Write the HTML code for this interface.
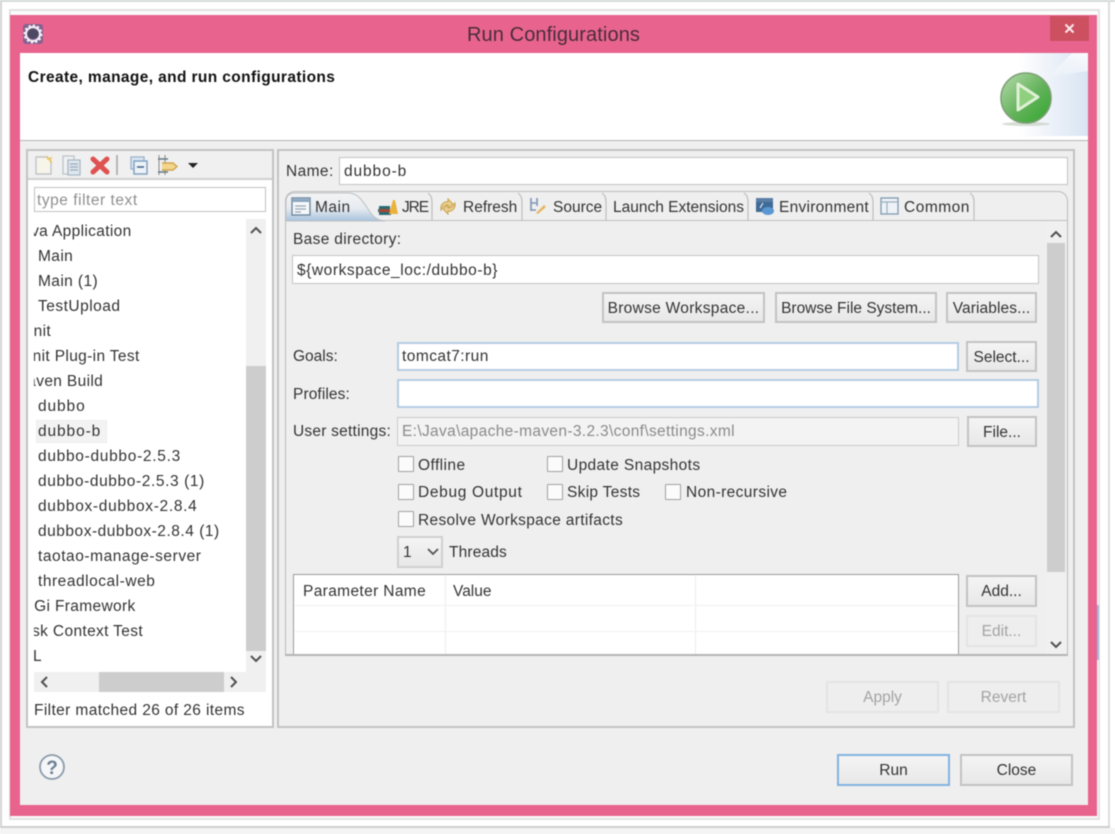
<!DOCTYPE html>
<html><head><meta charset="utf-8"><style>
html,body{margin:0;padding:0;width:1115px;height:834px;overflow:hidden;background:#fff}
#r{position:absolute;left:0;top:0;width:1115px;height:834px;overflow:hidden;filter:blur(0.5px);font-family:"Liberation Sans",sans-serif;font-size:15.5px;color:#333}
.a{position:absolute;box-sizing:border-box}
.t{position:absolute;white-space:nowrap;line-height:20px;height:20px;margin-top:1px}
.b{position:absolute;box-sizing:border-box;border:2px solid #c2c2c2;background:linear-gradient(#f4f4f4,#e8e8e8);text-align:center;white-space:nowrap;padding-top:2px}
.d{border-color:#e4e4e4;background:#eee;color:#a3a3a3}
.i{position:absolute;box-sizing:border-box;background:#fff;border:1px solid #c2c2c2;white-space:nowrap}
.f{border:2px solid #b4cde4}
.c{position:absolute;box-sizing:border-box;width:16px;height:16px;border:1.5px solid #a0a0a0;background:#fbfbfb;border-radius:1px}
.v{position:absolute;width:1px;background:#c4c4c4}
svg{position:absolute;overflow:visible}
</style></head><body><div id="r">
<div class="a" style="left:0;top:0;width:1115px;height:2px;background:#d4dad8"></div>
<div class="a" style="left:0;top:0;width:2px;height:828px;background:#d4d4d4"></div>
<div class="a" style="left:1108px;top:0;width:2px;height:828px;background:#dcdcdc"></div>
<div class="a" style="left:0;top:826px;width:1110px;height:2px;background:#cecece"></div>
<div class="a" style="left:0;top:828px;width:1115px;height:6px;background:#f4f4f4"></div>
<div class="a" style="left:9px;top:9px;width:1091px;height:811px;background:#fbfbfb;border:2px solid #e2e2e2"></div>
<div class="a" style="left:10px;top:15px;width:1087px;height:801px;background:#e8648f"></div>
<div class="a" style="left:1097px;top:605px;width:2px;height:55px;background:#a6b6da"></div>
<div class="a" style="left:1050px;top:16px;width:39px;height:25px;background:#cc5060"></div>
<svg style="left:1050px;top:16px" width="39" height="25"><path d="M15.500 8.500l8 8M23.500 8.500l-8 8" stroke="#fbeaec" stroke-width="2"/></svg>
<svg style="left:23px;top:24px" width="20" height="20"><rect width="20" height="20" rx="3" fill="#86608f"/><circle cx="10" cy="10" r="7" fill="none" stroke="#f2f2f6" stroke-width="2"/><circle cx="10" cy="10" r="8.500" fill="none" stroke="#f2f2f6" stroke-width="2" stroke-dasharray="2.200 2.200"/><ellipse cx="10" cy="10" rx="5.500" ry="5" fill="#4c4862"/></svg>
<div class="t" style="left:467px;top:24px;font-size:20px;color:#4a2c3a;letter-spacing:.1px">Run Configurations</div>

<div class="a" style="left:20px;top:53px;width:1068px;height:87px;background:#fff"></div>
<svg style="left:960px;top:53px" width="128" height="87"><defs><linearGradient id="g1" x1="0" y1="0" x2="1" y2="0"><stop offset="0" stop-color="#fff"/><stop offset=".45" stop-color="#fff"/><stop offset="1" stop-color="#d9e4f3"/></linearGradient><linearGradient id="g4" x1="0" y1="1" x2="1" y2="0"><stop offset="0" stop-color="#fff" stop-opacity="0"/><stop offset="1" stop-color="#fff" stop-opacity=".9"/></linearGradient><linearGradient id="g2" x1="0" y1="0" x2="1" y2="1"><stop offset="0" stop-color="#b9dcae"/><stop offset=".55" stop-color="#62b25a"/><stop offset="1" stop-color="#2fa62a"/></linearGradient></defs><rect x="0" y="0" width="128" height="83" fill="url(#g1)"/><path d="M128 0H112L88 24 128 18Z" fill="url(#g4)"/><ellipse cx="66" cy="71" rx="24" ry="2" fill="#c6d0c2" opacity=".7"/><circle cx="66" cy="45" r="25" fill="url(#g2)" stroke="#7f9f78" stroke-width="1.600"/><path d="M58 31V57L78 44Z" fill="#8fd07e" stroke="#dff0d6" stroke-width="3" stroke-linejoin="round"/></svg>
<div class="t" style="left:28px;top:67px;font-weight:bold;font-size:15.5px;color:#111;letter-spacing:.38px">Create, manage, and run configurations</div>
<div class="a" style="left:20px;top:140px;width:1068px;height:665px;background:#efefef;border-top:1px solid #b4b4b4"></div>

<!-- left panel -->
<div class="a" style="left:26px;top:149px;width:248px;height:579px;background:#fff;border:2px solid #c2c2c2"></div>
<div class="a" style="left:28px;top:151px;width:244px;height:29px;background:#f0f0f0;border-bottom:2px solid #d0d0d0"></div>
<svg style="left:34px;top:154px" width="175" height="24"><path d="M2 3H13L17 7V20H2Z" fill="#f7f5ea" stroke="#c0c4ca" stroke-width="1.400"/><path d="M13 2l1 3 3-1-1 3 2 2" fill="none" stroke="#e9c766" stroke-width="1.600"/><path d="M29 2H40V20H29Z" fill="#eef1f2" stroke="#bcc4c8" stroke-width="1.300"/><path d="M34 6H46V21H34Z" fill="#e0e7ee" stroke="#a9b8c6" stroke-width="1.300"/><path d="M36 10h8M36 13h8M36 16h8" stroke="#95a8bb" stroke-width="1.200"/><path d="M59 5l14 13M73 5L59 18" stroke="#de5252" stroke-width="5" stroke-linecap="round"/><path d="M83 1V21" stroke="#a8a8a8" stroke-width="1.600"/><rect x="97" y="3" width="13" height="12" fill="#dbe6f1" stroke="#9cb5cd" stroke-width="1.300"/><rect x="100" y="7" width="13" height="13" fill="#edf2f7" stroke="#7d9fc0" stroke-width="1.400"/><path d="M103 13h7" stroke="#45678a" stroke-width="1.600"/><path d="M125 1V21M131 1V21" stroke="#888" stroke-width="1"/><path d="M124 5h10M124 18h10" stroke="#677886" stroke-width="1.400"/><path d="M128 9h11l4 3.500-4 3.500h-11" fill="#f3d58c" stroke="#d0a64e" stroke-width="1.400"/><path d="M154 9h10l-5 5Z" fill="#222"/></svg>
<div class="i" style="left:34px;top:187px;width:232px;height:25px;border:1.5px solid #c2c2c2"></div>
<div class="t" style="left:37px;top:190px;color:#8f8f8f;letter-spacing:.53px">type filter text</div>
<div style="position:absolute;left:34px;top:220px;width:212px;height:450px;overflow:hidden">
<div class="t" style="left:-20px;top:1px;letter-spacing:.35px">Java Application</div>
<div class="t" style="left:4px;top:26px;letter-spacing:.4px">Main</div>
<div class="t" style="left:4px;top:51px;letter-spacing:.4px">Main (1)</div>
<div class="t" style="left:4px;top:76px;letter-spacing:.5px">TestUpload</div>
<div class="t" style="left:-20px;top:101px;letter-spacing:.35px">JUnit</div>
<div class="t" style="left:-21px;top:126px;letter-spacing:.35px">JUnit Plug-in Test</div>
<div class="t" style="left:-20px;top:151px;letter-spacing:.35px">Maven Build</div>
<div class="t" style="left:4px;top:176px;letter-spacing:.9px">dubbo</div>
<div class="a" style="left:2px;top:200px;width:71px;height:23px;background:#f3f3f3;border:1px solid #eeeeee"></div>
<div class="t" style="left:4px;top:201px;letter-spacing:.9px">dubbo-b</div>
<div class="t" style="left:4px;top:226px;letter-spacing:.7px">dubbo-dubbo-2.5.3</div>
<div class="t" style="left:4px;top:251px;letter-spacing:.6px">dubbo-dubbo-2.5.3 (1)</div>
<div class="t" style="left:4px;top:276px;letter-spacing:.68px">dubbox-dubbox-2.8.4</div>
<div class="t" style="left:4px;top:301px;letter-spacing:.52px">dubbox-dubbox-2.8.4 (1)</div>
<div class="t" style="left:4px;top:326px;letter-spacing:.55px">taotao-manage-server</div>
<div class="t" style="left:4px;top:351px;letter-spacing:.53px">threadlocal-web</div>
<div class="t" style="left:-23px;top:376px;letter-spacing:.35px">OSGi Framework</div>
<div class="t" style="left:-19px;top:401px;letter-spacing:.35px">Task Context Test</div>
<div class="t" style="left:-1px;top:426px">L</div>
</div>
<div class="a" style="left:246px;top:219px;width:20px;height:453px;background:#f0f0f0"></div>
<div class="a" style="left:246px;top:366px;width:20px;height:285px;background:#cdcdcd"></div>
<svg style="left:246px;top:219px" width="20" height="453"><path d="M5 14l5-5 5 5M5 437l5 5 5-5" fill="none" stroke="#505050" stroke-width="2"/></svg>
<div class="a" style="left:34px;top:672px;width:232px;height:20px;background:#f0f0f0"></div>
<div class="a" style="left:99px;top:672px;width:125px;height:20px;background:#cdcdcd"></div>
<svg style="left:34px;top:672px" width="232" height="20"><path d="M13 5l-5 5 5 5M197 5l5 5-5 5" fill="none" stroke="#505050" stroke-width="2"/></svg>
<div class="t" style="left:34px;top:700px;letter-spacing:.38px">Filter matched 26 of 26 items</div>

<!-- right panel -->
<div class="a" style="left:277px;top:149px;width:798px;height:579px;border:2px solid #c2c2c2;background:#efefef"></div>
<div class="t" style="left:286px;top:161px;letter-spacing:.4px">Name:</div>
<div class="i" style="left:339px;top:157px;width:729px;height:28px;border:1.5px solid #c4c4c4"></div>
<div class="t" style="left:344px;top:161px;letter-spacing:.9px">dubbo-b</div>

<!-- tab folder -->
<div class="a" style="left:285px;top:191px;width:783px;height:465px;border:1.5px solid #bcbcbc;border-radius:10px 10px 0 0;background:#efefef"></div>
<div class="a" style="left:286px;top:220px;width:781px;height:1px;background:#c0c0c0"></div>
<svg style="left:286px;top:192px" width="100" height="30"><defs><linearGradient id="g3" x1="0" y1="0" x2="0" y2="1"><stop offset="0" stop-color="#f4f4f4"/><stop offset=".55" stop-color="#e6ebf0"/><stop offset="1" stop-color="#a8c3dc"/></linearGradient></defs><path d="M0 29V10Q0 1 9 1H62C72 1 76 8 84 20C88 26 92 28 99 29Z" fill="url(#g3)" stroke="#bcc0c4" stroke-width="1"/></svg>
<svg style="left:291px;top:197px" width="20" height="20"><rect x="1" y="1" width="18" height="17" fill="#f6f8fa" stroke="#6d87a0" stroke-width="1.400"/><path d="M1 3.500h18" stroke="#8ba6bf" stroke-width="3"/><path d="M4 9h11M4 12h11M4 15h6" stroke="#97a6b5" stroke-width="1.200"/></svg>
<div class="t" style="left:315px;top:197px;letter-spacing:.5px">Main</div>
<svg style="left:378px;top:198px" width="20" height="18"><path d="M1 8h11v3H1zM0 11h12v3H0zM1 14h12v3H1z" fill="#2b6a73"/><path d="M1 11h11v3H1z" fill="#a44a33"/><path d="M11 16L15 2h2l3 14" fill="#e9b23b"/></svg>
<div class="t" style="left:402px;top:197px;letter-spacing:-1.1px">JRE</div>
<svg style="left:438px;top:196px" width="20" height="21"><path d="M3 14C2 8 7 5 10 6l0-3 5 5-5 4V9C7 9 5 10 3 14Z" fill="#ecd190" stroke="#c9a24e"/><path d="M17 7c1 6-4 9-7 8v3l-5-5 5-4v3c3 0 5-1 7-5Z" fill="#ecd190" stroke="#c9a24e"/></svg>
<div class="t" style="left:463px;top:197px">Refresh</div>
<svg style="left:528px;top:197px" width="20" height="20"><path d="M3 1V14M3 6h5M3 13h5M9 1v8" fill="none" stroke="#7d94b5" stroke-width="1.600"/><path d="M8 16l8-8 2 2-8 7Z" fill="#eab562"/></svg>
<div class="t" style="left:553px;top:197px">Source</div>
<div class="t" style="left:613px;top:197px">Launch Extensions</div>
<svg style="left:755px;top:197px" width="20" height="20"><rect x="1" y="1" width="17" height="14" fill="#3e6a98"/><path d="M1 1h17v4H1z" fill="#5b7ea4"/><path d="M5 11l3-5" stroke="#fff"/><ellipse cx="13" cy="14" rx="6" ry="4" fill="#5a97d2"/></svg>
<div class="t" style="left:779px;top:197px;letter-spacing:.27px">Environment</div>
<svg style="left:880px;top:197px" width="20" height="20"><rect x="1" y="1" width="17" height="16" fill="#eef2f6" stroke="#7f99b1" stroke-width="1.300"/><path d="M1 5h17M7 5v12" stroke="#9ab0c3" stroke-width="1.200"/></svg>
<div class="t" style="left:904px;top:197px;letter-spacing:.5px">Common</div>
<svg style="left:286px;top:192px" width="700" height="29" fill="none" stroke="#bebebe" stroke-width="1.200"><path d="M146 28V10C146 6 145 3 142 1M236 28V10C236 6 235 3 232 1M320 28V10C320 6 319 3 316 1M462 28V10C462 6 461 3 458 1M587 28V10C587 6 586 3 583 1M688 28V10C688 6 687 3 684 1"/></svg>

<div class="t" style="left:293px;top:229px;letter-spacing:.33px">Base directory:</div>
<div class="i" style="left:292px;top:255px;width:747px;height:29px;border:1.5px solid #c4c4c4"></div>
<div class="t" style="left:297px;top:260px;letter-spacing:.56px">${workspace_loc:/dubbo-b}</div>
<div class="b" style="left:602px;top:292px;width:163px;height:31px;line-height:25px;letter-spacing:.3px">Browse Workspace...</div>
<div class="b" style="left:775px;top:292px;width:162px;height:31px;line-height:25px">Browse File System...</div>
<div class="b" style="left:946px;top:292px;width:91px;height:31px;line-height:25px;letter-spacing:.1px">Variables...</div>
<div class="t" style="left:293px;top:346px">Goals:</div>
<div class="i f" style="left:397px;top:342px;width:562px;height:29px"></div>
<div class="t" style="left:402px;top:346px;letter-spacing:.45px">tomcat7:run</div>
<div class="b" style="left:966px;top:341px;width:71px;height:31px;line-height:25px">Select...</div>
<div class="t" style="left:293px;top:384px;letter-spacing:.1px">Profiles:</div>
<div class="i f" style="left:397px;top:379px;width:642px;height:29px"></div>
<div class="t" style="left:293px;top:421px;letter-spacing:.23px">User settings:</div>
<div class="i" style="left:397px;top:417px;width:562px;height:29px;background:#f3f3f3;border:1.5px solid #cbcbcb"></div>
<div class="t" style="left:402px;top:421px;color:#8a8a8a;letter-spacing:.34px">E:\Java\apache-maven-3.2.3\conf\settings.xml</div>
<div class="b" style="left:967px;top:416px;width:70px;height:31px;line-height:25px">File...</div>

<div class="c" style="left:398px;top:456px"></div><div class="t" style="left:418px;top:455px;letter-spacing:.43px">Offline</div>
<div class="c" style="left:547px;top:456px"></div><div class="t" style="left:567px;top:455px;letter-spacing:.37px">Update Snapshots</div>
<div class="c" style="left:398px;top:484px"></div><div class="t" style="left:418px;top:482px;letter-spacing:.67px">Debug Output</div>
<div class="c" style="left:547px;top:484px"></div><div class="t" style="left:567px;top:482px;letter-spacing:.3px">Skip Tests</div>
<div class="c" style="left:665px;top:484px"></div><div class="t" style="left:686px;top:482px;letter-spacing:.38px">Non-recursive</div>
<div class="c" style="left:398px;top:511px"></div><div class="t" style="left:418px;top:510px;letter-spacing:.33px">Resolve Workspace artifacts</div>
<div class="b" style="left:397px;top:536px;width:46px;height:32px;border-color:#d0d0d0"></div>
<div class="t" style="left:403px;top:542px">1</div>
<svg style="left:426px;top:547px" width="14" height="10"><path d="M2 2l5 5 5-5" fill="none" stroke="#555" stroke-width="1.800"/></svg>
<div class="t" style="left:449px;top:542px;letter-spacing:.15px">Threads</div>

<div class="a" style="left:293px;top:574px;width:666px;height:81px;background:#fff;border:1.5px solid #9c9c9c;border-bottom:none"></div>
<div class="v" style="left:445px;top:576px;height:79px;background:#ececec"></div>
<div class="v" style="left:695px;top:576px;height:79px;background:#ececec"></div>
<div class="a" style="left:295px;top:605px;width:662px;height:1px;background:#f0f0f0"></div>
<div class="a" style="left:295px;top:631px;width:662px;height:1px;background:#f0f0f0"></div>
<div class="t" style="left:303px;top:581px;letter-spacing:.36px">Parameter Name</div>
<div class="t" style="left:453px;top:581px">Value</div>
<div class="b" style="left:966px;top:575px;width:71px;height:32px;line-height:26px">Add...</div>
<div class="b d" style="left:966px;top:615px;width:71px;height:32px;line-height:26px">Edit...</div>
<div class="a" style="left:1046px;top:222px;width:20px;height:433px;background:#f0f0f0"></div>
<div class="a" style="left:1047px;top:243px;width:18px;height:329px;background:#cdcdcd"></div>
<svg style="left:1046px;top:222px" width="20" height="433"><path d="M5 15l5-5 5 5M5 420l5 5 5-5" fill="none" stroke="#505050" stroke-width="2"/></svg>
<div class="a" style="left:285px;top:654px;width:783px;height:2px;background:#b4b4b4"></div>

<div class="b d" style="left:826px;top:681px;width:113px;height:32px;line-height:26px">Apply</div>
<div class="b d" style="left:947px;top:681px;width:113px;height:32px;line-height:26px">Revert</div>

<svg style="left:38px;top:753px" width="28" height="28"><circle cx="14" cy="14" r="12" fill="#f4f6f8" stroke="#8c9cac" stroke-width="1.800"/><text x="14" y="21" text-anchor="middle" font-family="Liberation Sans" font-weight="bold" font-size="19" fill="#6d8094">?</text></svg>
<div class="b" style="left:837px;top:754px;width:113px;height:32px;line-height:26px;border-color:#82b3e0">Run</div>
<div class="b" style="left:960px;top:754px;width:113px;height:32px;line-height:26px">Close</div>
</div></body></html>
